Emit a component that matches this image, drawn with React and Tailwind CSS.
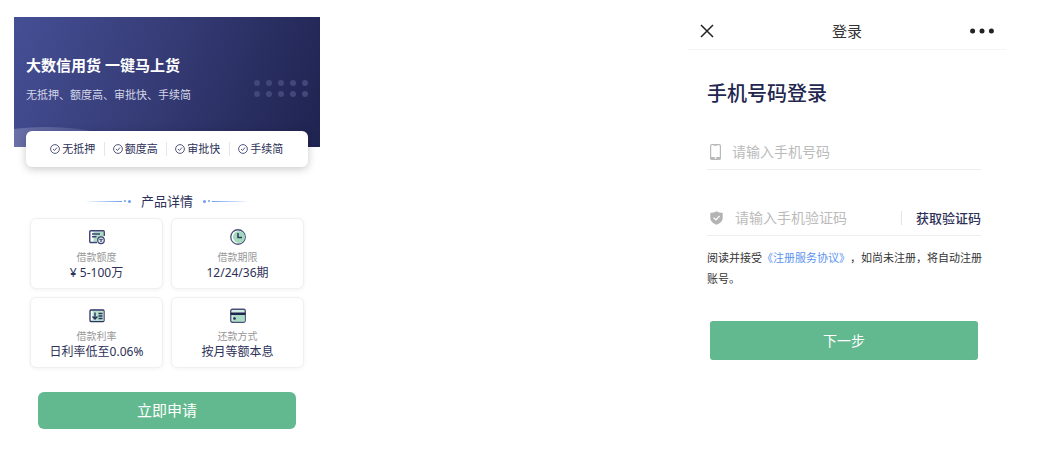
import React, { useState } from "react";

const tags = ["无抵押", "额度高", "审批快", "手续简"];

const CheckIcon = () => (
  <svg viewBox="0 0 20 20" className="w-[10px] h-[10px] shrink-0" fill="none" stroke="#4b4f76" strokeWidth="1.9" aria-hidden="true">
    <circle cx="10" cy="10" r="8.8" />
    <path d="M6 10l3 3 5-6" />
  </svg>
);

const AmountIcon = () => (
  <svg viewBox="0 0 32 32" className="w-4 h-4" fill="none" stroke="#3f4374" strokeWidth="2.8" aria-hidden="true">
    <rect x="9" y="5" width="20" height="20" fill="#a9dcc2" stroke="none" />
    <path d="M16 27H3.5a2 2 0 0 1-2-2V5.5a2 2 0 0 1 2-2h25a2 2 0 0 1 2 2V14" />
    <path d="M6 10h16M6 15.5h9" />
    <circle cx="24" cy="22.5" r="6.6" fill="#dfeeea" strokeWidth="2.4" />
    <path d="M24 26v-5M21 20l3 2.6 3-2.6" strokeWidth="2.4" />
  </svg>
);

const ClockIcon = () => (
  <svg viewBox="0 0 32 32" className="w-4 h-4" fill="none" stroke="#4a4e7a" strokeWidth="2.6" aria-hidden="true">
    <circle cx="16" cy="16" r="14.5" fill="#ffffff" />
    <circle cx="18" cy="16" r="12" fill="#a3dabd" stroke="none" />
    <path d="M16 8v9h8" stroke="#2f3566" strokeWidth="3" />
  </svg>
);

const RateIcon = () => (
  <svg viewBox="0 0 32 32" className="w-4 h-4" fill="none" stroke="#2c3160" strokeWidth="2.6" aria-hidden="true">
    <rect x="2" y="4" width="28" height="23" rx="2" fill="#ffffff" />
    <rect x="7" y="6" width="22" height="20" fill="#b5e2ca" stroke="none" />
    <path d="M12 9v13M7 17l5 5 5-5" strokeWidth="2.8" />
    <path d="M19 11h8M19 16h8M19 21h8" />
  </svg>
);

const CardIcon = () => (
  <svg viewBox="0 0 32 32" className="w-4 h-4" fill="none" stroke="#4a4e7a" strokeWidth="2.6" aria-hidden="true">
    <rect x="1.5" y="2.5" width="29" height="26" rx="3" fill="#d3ede1" />
    <path d="M6 14h23v13H6z" fill="#a9dcc2" stroke="none" />
    <path d="M1 11.5h30" stroke="#22264f" strokeWidth="5" />
    <circle cx="9" cy="21" r="2.6" fill="#22264f" stroke="none" />
  </svg>
);

const details = [
  { label: "借款额度", value: "¥ 5-100万", Icon: AmountIcon },
  { label: "借款期限", value: "12/24/36期", Icon: ClockIcon },
  { label: "借款利率", value: "日利率低至0.06%", Icon: RateIcon },
  { label: "还款方式", value: "按月等额本息", Icon: CardIcon },
];

const ProductPage = () => (
  <section className="w-full max-w-[306px] pt-[17px] text-[#2d3158]">
    {/* Banner */}
    <div className="relative overflow-hidden bg-linear-110 from-[#454f95] via-[#343a73] to-[#1f2350] px-3 pt-[38px] pb-11">
      <h1 className="text-[15px] leading-5 font-bold text-white">大数信用货 一键马上货</h1>
      <p className="mt-3 text-[11px] leading-4 text-[#d5d7e8]">无抵押、额度高、审批快、手续简</p>
      <div className="absolute right-3 top-[63px] grid grid-cols-5 gap-x-[6px] gap-y-[5px]">
        {Array.from({ length: 10 }, (_, i) => (
          <span key={i} className="w-[6px] h-[6px] rounded-full bg-[#43477a]" />
        ))}
      </div>
      <div className="absolute -left-12 top-[110px] w-40 h-12 rounded-[50%] bg-linear-to-r from-[#7d82b4] to-[#434a8a]" />
    </div>

    {/* Selling points */}
    <ul className="relative -mt-4 mx-3 px-4 py-[11px] grid grid-cols-4 rounded-md bg-white shadow-[0_2px_8px_rgba(0,0,0,0.22)] divide-x divide-[#e6e6ea]">
      {tags.map((tag) => (
        <li key={tag} className="flex items-center justify-center gap-[2px] text-[11px] leading-[14px]">
          <CheckIcon />
          {tag}
        </li>
      ))}
    </ul>

    {/* Details */}
    <div className="mt-6 flex items-center justify-center gap-[10px]">
      <div className="flex items-center gap-[2px]">
        <span className="w-[38px] h-px bg-linear-to-r from-transparent to-[#6f9ff5]" />
        <span className="w-[2px] h-[2px] rounded-full bg-[#6f9ff5]" />
        <span className="w-[3px] h-[3px] rounded-full bg-[#6f9ff5]" />
      </div>
      <h2 className="text-[13px] leading-5">产品详情</h2>
      <div className="flex items-center gap-[2px]">
        <span className="w-[3px] h-[3px] rounded-full bg-[#6f9ff5]" />
        <span className="w-[2px] h-[2px] rounded-full bg-[#6f9ff5]" />
        <span className="w-[38px] h-px bg-linear-to-l from-transparent to-[#6f9ff5]" />
      </div>
    </div>
    <div className="mt-[7px] px-4 grid grid-cols-2 gap-2">
      {details.map(({ label, value, Icon }) => (
        <div
          key={label}
          className="flex flex-col items-center pt-[10px] pb-[6px] rounded-md border border-[#f0f0f0] bg-white shadow-[0_1px_4px_rgba(0,0,0,0.05)]"
        >
          <Icon />
          <p className="mt-[5px] text-[10px] leading-[14px] text-[#999999]">{label}</p>
          <p className="text-[12px] leading-[18px]">{value}</p>
        </div>
      ))}
    </div>

    <div className="mt-6 px-6">
      <button type="button" className="w-full rounded-md bg-[#63b98f] py-2 text-[15px] leading-[21px] text-white">
        立即申请
      </button>
    </div>
  </section>
);

const LoginPage = () => {
  const [phone, setPhone] = useState("");
  const [code, setCode] = useState("");

  return (
    <section className="w-full max-w-[318px] text-[#333333]">
      {/* Nav bar */}
      <header className="flex items-center justify-between pt-[21px] pb-2 px-3 border-b border-[#f5f5f5]">
        <button type="button" aria-label="关闭" className="w-6">
          <svg viewBox="0 0 14 14" className="w-[14px] h-[14px]" fill="none" stroke="#222222" strokeWidth="1.5">
            <path d="M1 1l12 12M13 1L1 13" />
          </svg>
        </button>
        <h2 className="text-[15px] leading-5">登录</h2>
        <button type="button" aria-label="更多">
          <svg viewBox="0 0 24 6" className="w-6 h-[6px]" fill="#222222">
            <circle cx="2.6" cy="3" r="2.5" />
            <circle cx="12" cy="3" r="2.5" />
            <circle cx="21.4" cy="3" r="2.5" />
          </svg>
        </button>
      </header>

      <form className="pl-[19px] pr-[25px]" onSubmit={(e) => e.preventDefault()}>
        <h1 className="mt-7 text-[20px] leading-8 font-medium text-[#23274f]">手机号码登录</h1>

        <div className="mt-6 flex items-center h-9 border-b border-[#eeeeee]">
          <label htmlFor="phone" aria-label="手机号码" className="w-[25px] pl-[3px] shrink-0">
            <svg viewBox="0 0 11 16" className="w-[11px] h-4" fill="none" stroke="#b9b9b9">
              <rect x="0.6" y="0.6" width="9.8" height="14.8" rx="1.4" strokeWidth="1.2" />
              <path d="M0.6 14.2h9.8" strokeWidth="2.4" />
              <path d="M4 1.2h3" strokeWidth="1" />
              <circle cx="5.5" cy="14" r="0.9" fill="#ffffff" stroke="none" />
            </svg>
          </label>
          <input
            id="phone"
            type="tel"
            value={phone}
            onChange={(e) => setPhone(e.target.value)}
            placeholder="请输入手机号码"
            className="min-w-0 flex-1 text-[14px] leading-5 outline-none placeholder:text-[#bbbbbb]"
          />
        </div>

        <div className="mt-[30px] flex items-center h-9 border-b border-[#eeeeee]">
          <label htmlFor="code" aria-label="验证码" className="w-7 pl-[3px] shrink-0">
            <svg viewBox="0 0 13 14" className="w-[13px] h-[14px]">
              <path d="M6.5 0.3C8.4 1.3 10.4 1.8 12.7 1.8V7c0 3.2-2.3 5.3-6.2 6.7C2.6 12.3 0.3 10.2 0.3 7V1.8C2.6 1.8 4.6 1.3 6.5 0.3z" fill="#b3b3b3" />
              <path d="M3.6 6.6l2.3 2.3 3.7-4" fill="none" stroke="#ffffff" strokeWidth="1.3" />
            </svg>
          </label>
          <input
            id="code"
            type="text"
            value={code}
            onChange={(e) => setCode(e.target.value)}
            placeholder="请输入手机验证码"
            className="min-w-0 flex-1 text-[14px] leading-5 outline-none placeholder:text-[#bbbbbb]"
          />
          <button type="button" className="pl-[14px] border-l border-[#e5e5e5] text-[13px] leading-[14px] font-medium text-[#2d3158]">
            获取验证码
          </button>
        </div>

        <p className="mt-[11px] -mr-2 text-[11px] leading-[21px] [text-spacing-trim:space-all]">
          阅读并接受<a href="#agreement" className="text-[#5b93f0]">《注册服务协议》</a>，如尚未注册，将自动注册账号。
        </p>

        <div className="mt-8 px-[3px]">
          <button type="submit" className="w-full rounded-[3px] bg-[#63b98f] py-[9px] text-[14px] leading-[21px] text-white">
            下一步
          </button>
        </div>
      </form>
    </section>
  );
};

const App = () => (
  <main className="flex justify-between gap-8 bg-white pl-[14px] pr-[47px] font-['Noto_Sans','Noto_Sans_CJK_SC',sans-serif]">
    <ProductPage />
    <LoginPage />
  </main>
);

export default App;
